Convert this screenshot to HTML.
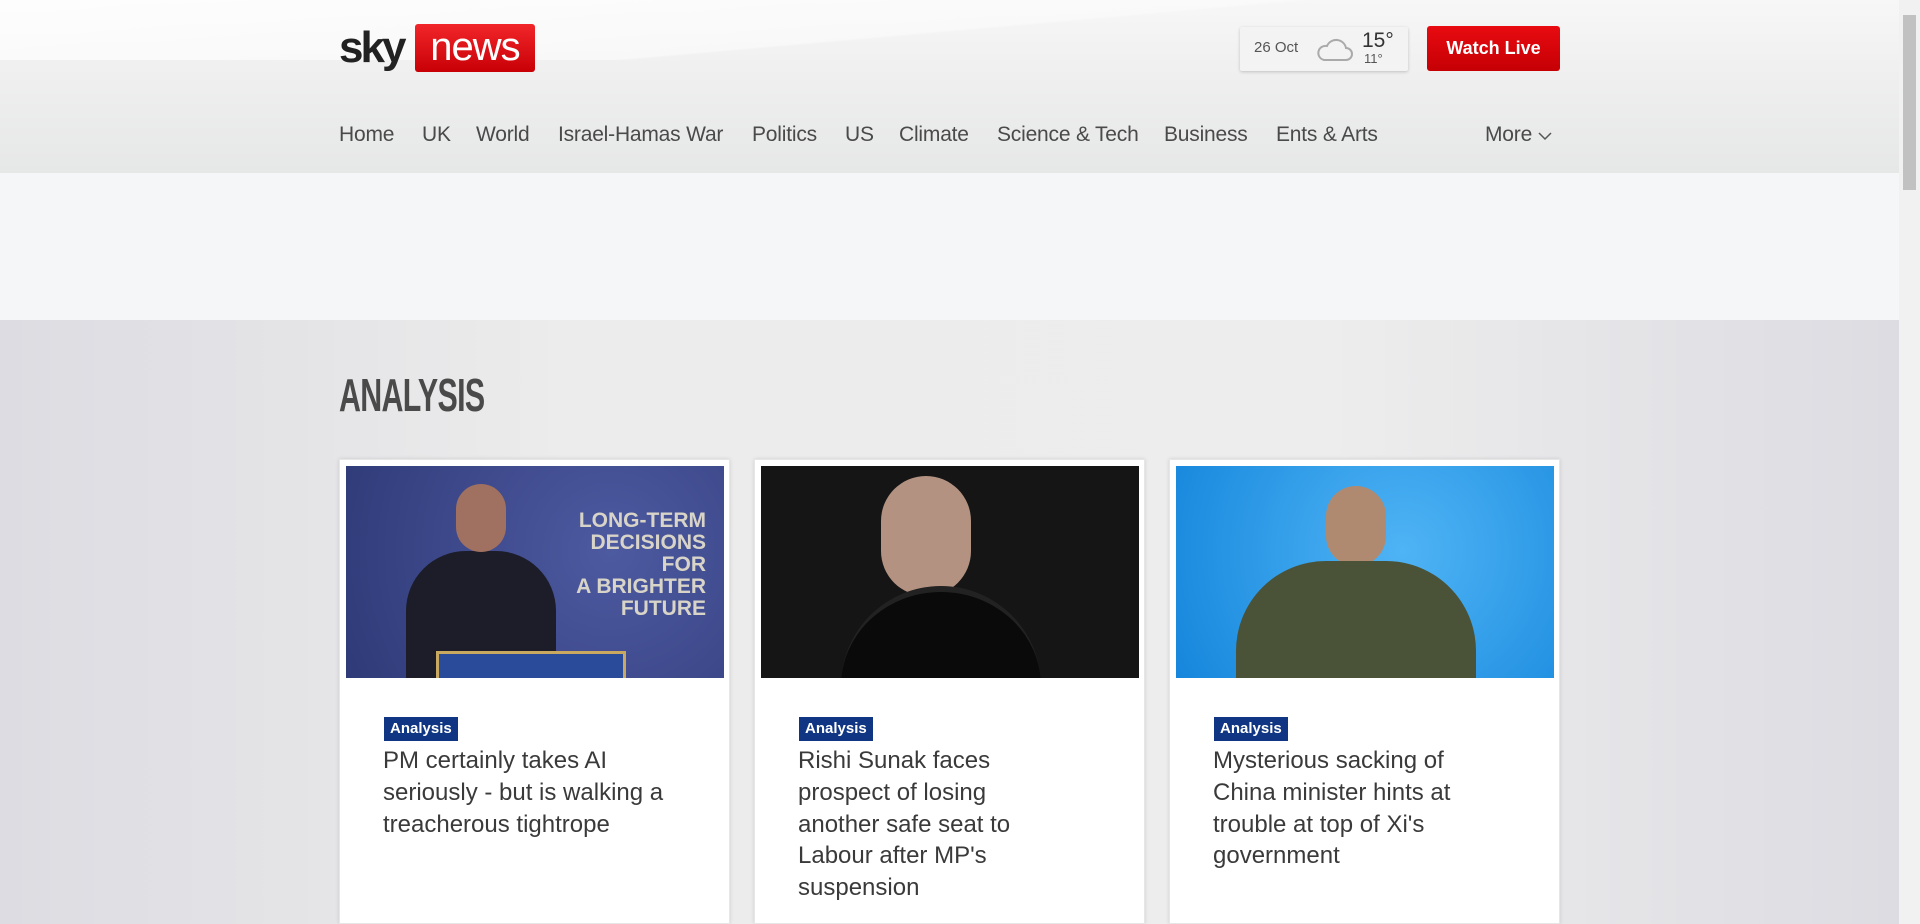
<!DOCTYPE html>
<html style="overflow:hidden"><head><meta charset="utf-8"><style>
*{margin:0;padding:0;box-sizing:border-box}
html,body{width:1920px;height:924px;overflow:hidden}
body{font-family:"Liberation Sans",sans-serif;background:#e6e6ea;position:relative}
.hdr{position:absolute;left:0;top:0;width:1899px;height:173px;background:linear-gradient(180deg,#f7f7f7 0%,#eeeeee 50%,#e6e7e7 100%)}
.hdr:before{content:"";position:absolute;left:0;top:0;width:100%;height:60px;background:linear-gradient(175deg,#fff 0%,#fafafa 50%,transparent 51%);opacity:.8}
.logo{position:absolute;left:339px;top:24px;height:48px}
.sky{position:absolute;left:0;top:0;font:bold 44px/48px "Liberation Sans",sans-serif;letter-spacing:-3px;color:#222}
.news{position:absolute;left:76px;top:0;width:120px;height:48px;background:linear-gradient(#f1262a,#c80006);border-radius:3px;color:#fff;font:40px/46px "Liberation Sans Narrow","Liberation Sans",sans-serif;text-align:center;letter-spacing:-1px}
.wx{position:absolute;left:1240px;top:27px;width:168px;height:44px;background:#f3f3f3;box-shadow:0 1px 3px rgba(0,0,0,.2);border-radius:2px;font-size:15px;color:#555}
.wl{position:absolute;left:1427px;top:26px;width:133px;height:45px;background:linear-gradient(#e80b10,#c50005);border-radius:3px;color:#fff;font:bold 18px/45px "Liberation Sans Narrow","Liberation Sans",sans-serif;text-align:center}
.nav a{position:absolute;top:123px;font:21px "Liberation Sans",sans-serif;color:#4a4a4a;text-decoration:none;letter-spacing:-.2px}
.ad{position:absolute;left:0;top:173px;width:1899px;height:147px;background:#f5f6f8}
.main{position:absolute;left:0;top:320px;width:1899px;height:604px;background:linear-gradient(90deg,#dcdce2 0%,#ececec 30%,#ededed 70%,#dcdce2 100%)}
h1{position:absolute;left:339px;top:370px;font:bold 46px/50px "Liberation Sans Narrow","Liberation Sans",sans-serif;color:#4a4a4a;letter-spacing:-1px;transform:scaleX(.66);transform-origin:left}
.card{position:absolute;top:459px;width:391px;height:465px;background:#fff;box-shadow:0 0 4px rgba(0,0,0,.12);border:1px solid #e6e6e6}
.img{position:absolute;left:6px;top:6px;width:378px;height:212px;overflow:hidden}
.tag{position:absolute;left:44px;top:257px;background:#0f3583;color:#fff;font:bold 15px/24px "Liberation Sans Narrow","Liberation Sans",sans-serif;padding:0 6px}
.t{position:absolute;left:43px;top:285px;width:340px;font:24px/31.8px "Liberation Sans Narrow","Liberation Sans",sans-serif;color:#3a3a3a;white-space:nowrap}
.sb{position:absolute;left:1899px;top:0;width:21px;height:924px;background:#f1f1f1}
.sb div{position:absolute;left:4px;top:15px;width:13px;height:175px;background:#c1c1c1}
</style></head><body>
<div class="hdr"></div>
<div class="logo"><div class="sky">sky</div><div class="news">news</div></div>
<div class="wx"><span style="position:absolute;left:14px;top:12px">26 Oct</span>
<svg style="position:absolute;left:76px;top:9px" width="38" height="26" viewBox="0 0 38 26"><path d="M8 24h22a6 6 0 0 0 0-12 10 10 0 0 0-19-2 7 7 0 0 0-3 14z" fill="none" stroke="#aaa" stroke-width="2"/></svg>
<span style="position:absolute;left:122px;top:2px;font-size:21px;color:#333">15°</span><span style="position:absolute;left:124px;top:24px;font-size:13px">11°</span></div>
<div class="wl">Watch Live</div>
<div class="nav">
<a style="left:339px">Home</a><a style="left:422px">UK</a><a style="left:476px">World</a><a style="left:558px">Israel-Hamas War</a><a style="left:752px">Politics</a><a style="left:845px">US</a><a style="left:899px">Climate</a><a style="left:997px">Science &amp; Tech</a><a style="left:1164px">Business</a><a style="left:1276px">Ents &amp; Arts</a><a style="left:1485px">More <svg width="14" height="10" viewBox="0 0 14 10"><path d="M1 2l6 6 6-6" fill="none" stroke="#555" stroke-width="1.5"/></svg></a>
</div>
<div class="ad"></div>
<div class="main"></div>
<h1>ANALYSIS</h1>
<div class="card" style="left:339px"><div class="img" style="background:radial-gradient(circle at 70% 40%,#4d5aa0,#2f3a78)">
<div style="position:absolute;left:200px;top:44px;color:#d8d4c8;font:bold 21px/22px 'Liberation Sans Narrow','Liberation Sans',sans-serif;text-align:right;width:160px">LONG-TERM<br>DECISIONS FOR<br>A BRIGHTER<br>FUTURE</div>
<div style="position:absolute;left:60px;top:85px;width:150px;height:130px;background:#1c1d28;border-radius:60px 60px 0 0"></div>
<div style="position:absolute;left:110px;top:18px;width:50px;height:68px;background:#a07060;border-radius:25px"></div>
<div style="position:absolute;left:90px;top:185px;width:190px;height:30px;background:#2a4a9a;border:3px solid #c9a860"></div></div>
<div class="tag">Analysis</div><div class="t">PM certainly takes AI<br>seriously - but is walking a<br>treacherous tightrope</div></div>
<div class="card" style="left:754px"><div class="img" style="background:#151515">
<div style="position:absolute;left:120px;top:10px;width:90px;height:120px;background:#b39282;border-radius:45px"></div>
<div style="position:absolute;left:80px;top:120px;width:200px;height:100px;background:#0a0a0a;border-radius:100px 100px 0 0;border-top:6px solid #222"></div></div>
<div class="tag">Analysis</div><div class="t">Rishi Sunak faces<br>prospect of losing<br>another safe seat to<br>Labour after MP's<br>suspension</div></div>
<div class="card" style="left:1169px"><div class="img" style="background:radial-gradient(circle at 60% 40%,#4fb4f5,#1586dc)">
<div style="position:absolute;left:150px;top:20px;width:60px;height:80px;background:#b08a70;border-radius:30px"></div>
<div style="position:absolute;left:60px;top:95px;width:240px;height:120px;background:#4a5238;border-radius:90px 90px 0 0"></div></div>
<div class="tag">Analysis</div><div class="t">Mysterious sacking of<br>China minister hints at<br>trouble at top of Xi's<br>government</div></div>
<div class="sb"><div></div></div>
</body></html>
